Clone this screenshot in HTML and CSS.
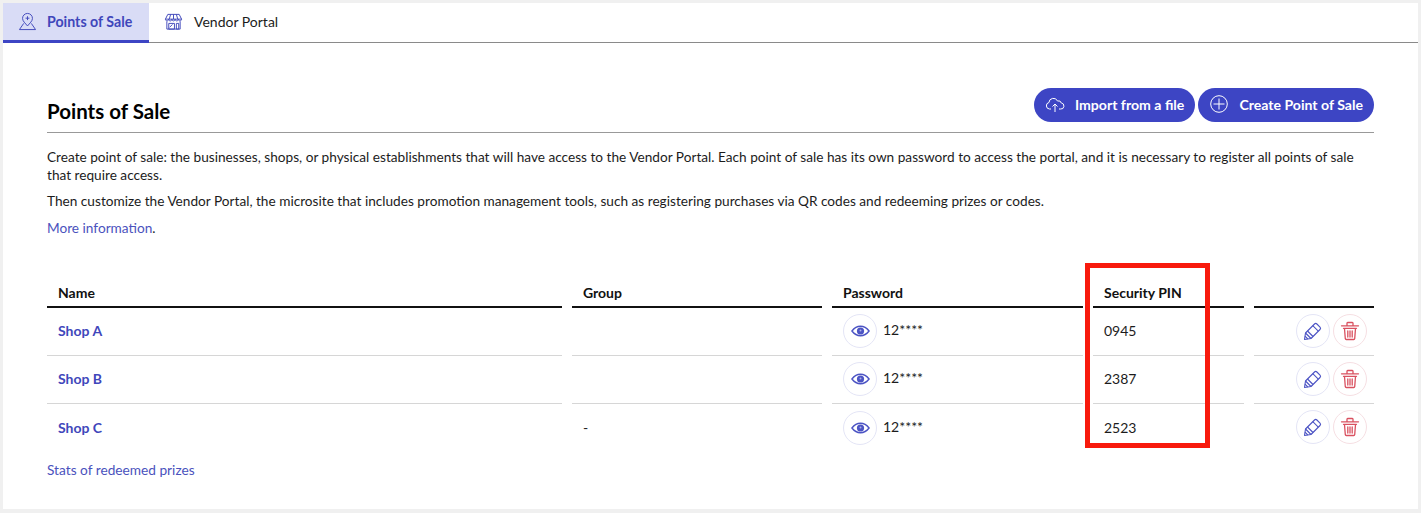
FILE: index.html
```html
<!DOCTYPE html>
<html lang="en">
<head>
<meta charset="utf-8">
<title>Points of Sale</title>
<link rel="stylesheet" href="styles.css">
</head>
<body>
<svg class="sprite" aria-hidden="true">
  <symbol id="eye" viewBox="0 0 20 12"><path d="M1 6c2.500-3.300 5.500-5 9-5s6.500 1.700 9 5c-2.500 3.300-5.500 5-9 5S3.500 9.300 1 6z" fill="none" stroke="currentColor" stroke-width="1.500"/><circle cx="10" cy="6" r="3.800" fill="currentColor"/><circle cx="10" cy="5.500" r="1" fill="#aeb2ea"/></symbol>
  <symbol id="pencil" viewBox="0 0 20 20"><g fill="none" stroke="currentColor" stroke-width="1.100" stroke-linejoin="round"><path d="M1.500 18.500l1-6.500L11.500 3a1.700 1.700 0 0 1 2.400 0l3.100 3.100a1.700 1.700 0 0 1 0 2.400L8 17.500z"/><path d="M9.800 4.700l5.500 5.500M2.500 12l5.500 5.500M2 15.200l2.800 2.800M4.500 10l5.500 5.500"/></g></symbol>
  <symbol id="trash" viewBox="0 0 20 20"><g fill="none" stroke="currentColor" stroke-width="1.300" stroke-linecap="round" stroke-linejoin="round"><path d="M1.500 4.800h17M7 4.500V2.200a.7.700 0 0 1 .7-.7h4.600a.7.700 0 0 1 .7.700v2.300"/><path d="M3.500 7.300h13M4.500 7.500l.8 10.200a1 1 0 0 0 1 .8h7.400a1 1 0 0 0 1-.8l.8-10.200M7.800 10v6M10 10v6M12.200 10v6"/></g></symbol>
</svg>
<div class="panel">
  <nav class="tabs">
    <a class="tab active">
      <svg class="tab-icon" viewBox="0 0 20 20" fill="none" stroke="currentColor" stroke-width="1"><path d="M10 1.500a5.200 5.200 0 0 0-5.200 5.200c0 3 2.800 5 5.200 8 2.400-3 5.200-5 5.200-8A5.200 5.200 0 0 0 10 1.500z"/><path d="M10 4.500v4M8 6.500h4"/><path d="M6 12l-4.500 6.500h17L14 12"/></svg>
      <span>Points of Sale</span>
    </a>
    <a class="tab">
      <svg class="tab-icon" viewBox="0 0 20 20" fill="none" stroke="currentColor" stroke-width="1"><path d="M4 2.500h12l2.500 5H1.500z"/><path d="M1.500 7.500c0 2.500 3.400 2.500 3.400 0 0 2.500 3.400 2.500 3.400 0 0 2.500 3.400 2.500 3.400 0 0 2.500 3.400 2.500 3.400 0 0 2.500 3.400 2.500 3.400 0"/><path d="M7 2.500l-1.500 5M10 2.500v5M13 2.500l1.500 5"/><path d="M3 10v8h14v-8"/><path d="M5 12h6v6H5zM13 12h2.500v6H13z"/><path d="M6 16l3-3"/></svg>
      <span>Vendor Portal</span>
    </a>
  </nav>
  <main class="content">
    <header class="head">
      <h1>Points of Sale</h1>
      <div class="actions">
        <button class="btn">
          <svg class="btn-icon" viewBox="0 0 20 20" fill="none" stroke="currentColor" stroke-width="1"><path d="M6 15H4.500a3.300 3.300 0 0 1-.6-6.500 4.500 4.500 0 0 1 8.600-1.500 3 3 0 0 1 3.800 2 3 3 0 0 1-.8 6H14"/><path d="M10 18v-8M7.500 12.500 10 10l2.500 2.500"/></svg>
          <span>Import from a file</span>
        </button>
        <button class="btn">
          <svg class="btn-icon" viewBox="0 0 20 20" fill="none" stroke="currentColor" stroke-width="1"><circle cx="10" cy="10" r="8.300"/><path d="M10 4.500v11M4.500 10h11"/></svg>
          <span>Create Point of Sale</span>
        </button>
      </div>
    </header>
    <section class="intro">
      <p>Create point of sale: the businesses, shops, or physical establishments that will have access to the Vendor Portal. Each point of sale has its own password to access the portal, and it is necessary to register all points of sale that require access.</p>
      <p>Then customize the Vendor Portal, the microsite that includes promotion management tools, such as registering purchases via QR codes and redeeming prizes or codes.</p>
      <p><a class="link">More information</a>.</p>
    </section>
    <div class="table">
      <div class="th">Name</div><div class="th">Group</div><div class="th">Password</div><div class="th">Security PIN</div><div class="th"></div>

      <div class="td"><a class="shop">Shop A</a></div><div class="td"></div>
      <div class="td pw"><span class="round"><svg class="eye"><use href="#eye"/></svg></span><span>12****</span></div>
      <div class="td pin">0945</div>
      <div class="td ops"><span class="round"><svg class="op"><use href="#pencil"/></svg></span><span class="round del"><svg class="op"><use href="#trash"/></svg></span></div>

      <div class="td"><a class="shop">Shop B</a></div><div class="td"></div>
      <div class="td pw"><span class="round"><svg class="eye"><use href="#eye"/></svg></span><span>12****</span></div>
      <div class="td pin">2387</div>
      <div class="td ops"><span class="round"><svg class="op"><use href="#pencil"/></svg></span><span class="round del"><svg class="op"><use href="#trash"/></svg></span></div>

      <div class="td last"><a class="shop">Shop C</a></div><div class="td last">-</div>
      <div class="td pw last"><span class="round"><svg class="eye"><use href="#eye"/></svg></span><span>12****</span></div>
      <div class="td pin last">2523</div>
      <div class="td ops last"><span class="round"><svg class="op"><use href="#pencil"/></svg></span><span class="round del"><svg class="op"><use href="#trash"/></svg></span></div>
    </div>
    <p class="stats"><a class="link">Stats of redeemed prizes</a></p>
  </main>
  <div class="highlight"></div>
</div>
</body>
</html>
```
FILE: styles.css
```css
* { box-sizing: border-box; }
html, body { margin: 0; height: 100%; }
body {
  padding: 3px;
  background: #f0f0f0;
  font-family: Lato, "Noto Sans", sans-serif;
  font-size: 14px;
  color: #1c1c1c;
  overflow: hidden;
}
.sprite { display: none; }
.panel { position: relative; background: #fff; height: 506px; width: 1415px; }
.tabs { display: flex; height: 40px; border-bottom: 1px solid #8a8a8a; }
.tab { display: flex; align-items: center; height: 40px; padding: 0 15px 3px; gap: 11px; color: #1c1c1c; white-space: nowrap; }
.tab.active { width: 146px; gap: 10px; font-size: 14.200px; background: #d9dcf6; color: #3f47bb; font-weight: 700; border-bottom: 3px solid #3d45c4; padding: 0 15px; }
.tab-icon { width: 19px; height: 19px; color: #3f47bb; flex: none; }
.content { padding: 0 44px; }
.head { display: flex; justify-content: space-between; align-items: flex-end; height: 45px; border-bottom: 1px solid #999; margin-top: 45px; padding-bottom: 9px; }
h1 { margin: 0; font-size: 20.500px; font-weight: 700; color: #000; line-height: 24px; }
.actions { display: flex; gap: 3px; align-self: flex-start; }
.btn { display: flex; align-items: center; height: 34px; border: 0; border-radius: 17px; background: #3d45c4; color: #fff; font: 700 14.100px Lato, "Noto Sans", sans-serif; padding: 0 11px 2px; gap: 10px; }
.btn-icon { width: 20px; height: 20px; flex: none; }
.intro { margin-top: 16px; font-size: 13.650px; }
.intro p { margin: 0 0 9px; line-height: 17.500px; }
.link { color: #4a52bd; }
.table { display: grid; grid-template-columns: 515px 250px 251px 151px 120px; column-gap: 10px; margin-top: 38px; }
.th { height: 33px; border-bottom: 2px solid #111; font-weight: 700; color: #111; padding: 6px 11px 0; line-height: 24px; }
.td { height: 48px; border-bottom: 1px solid #d6d6d6; padding: 0 11px 2px; display: flex; align-items: center; }
.td.last { border-bottom: 0; }
.shop { color: #3f47bb; font-weight: 700; }
.pw { gap: 6px; padding-top: 1px; padding-bottom: 2px; }
.pw > span:last-child { margin-top: -3px; }
.round { width: 34px; height: 34px; border: 1px solid #e4e5f6; border-radius: 50%; display: flex; align-items: center; justify-content: center; color: #4c54c4; flex: none; }
.del { border-color: #f6dfe3; color: #d9505f; }
.eye { width: 19px; height: 12px; }
.op { width: 20px; height: 20px; }
.ops { justify-content: flex-end; gap: 3px; padding: 0 7px 2px 0; }
.pin { padding-bottom: 2px; }
.stats { margin: 9px 0 0; line-height: 18px; font-size: 13.700px; }
.highlight { position: absolute; left: 1082px; top: 260px; width: 125px; height: 185px; border: 5px solid #f81a0d; }
```
